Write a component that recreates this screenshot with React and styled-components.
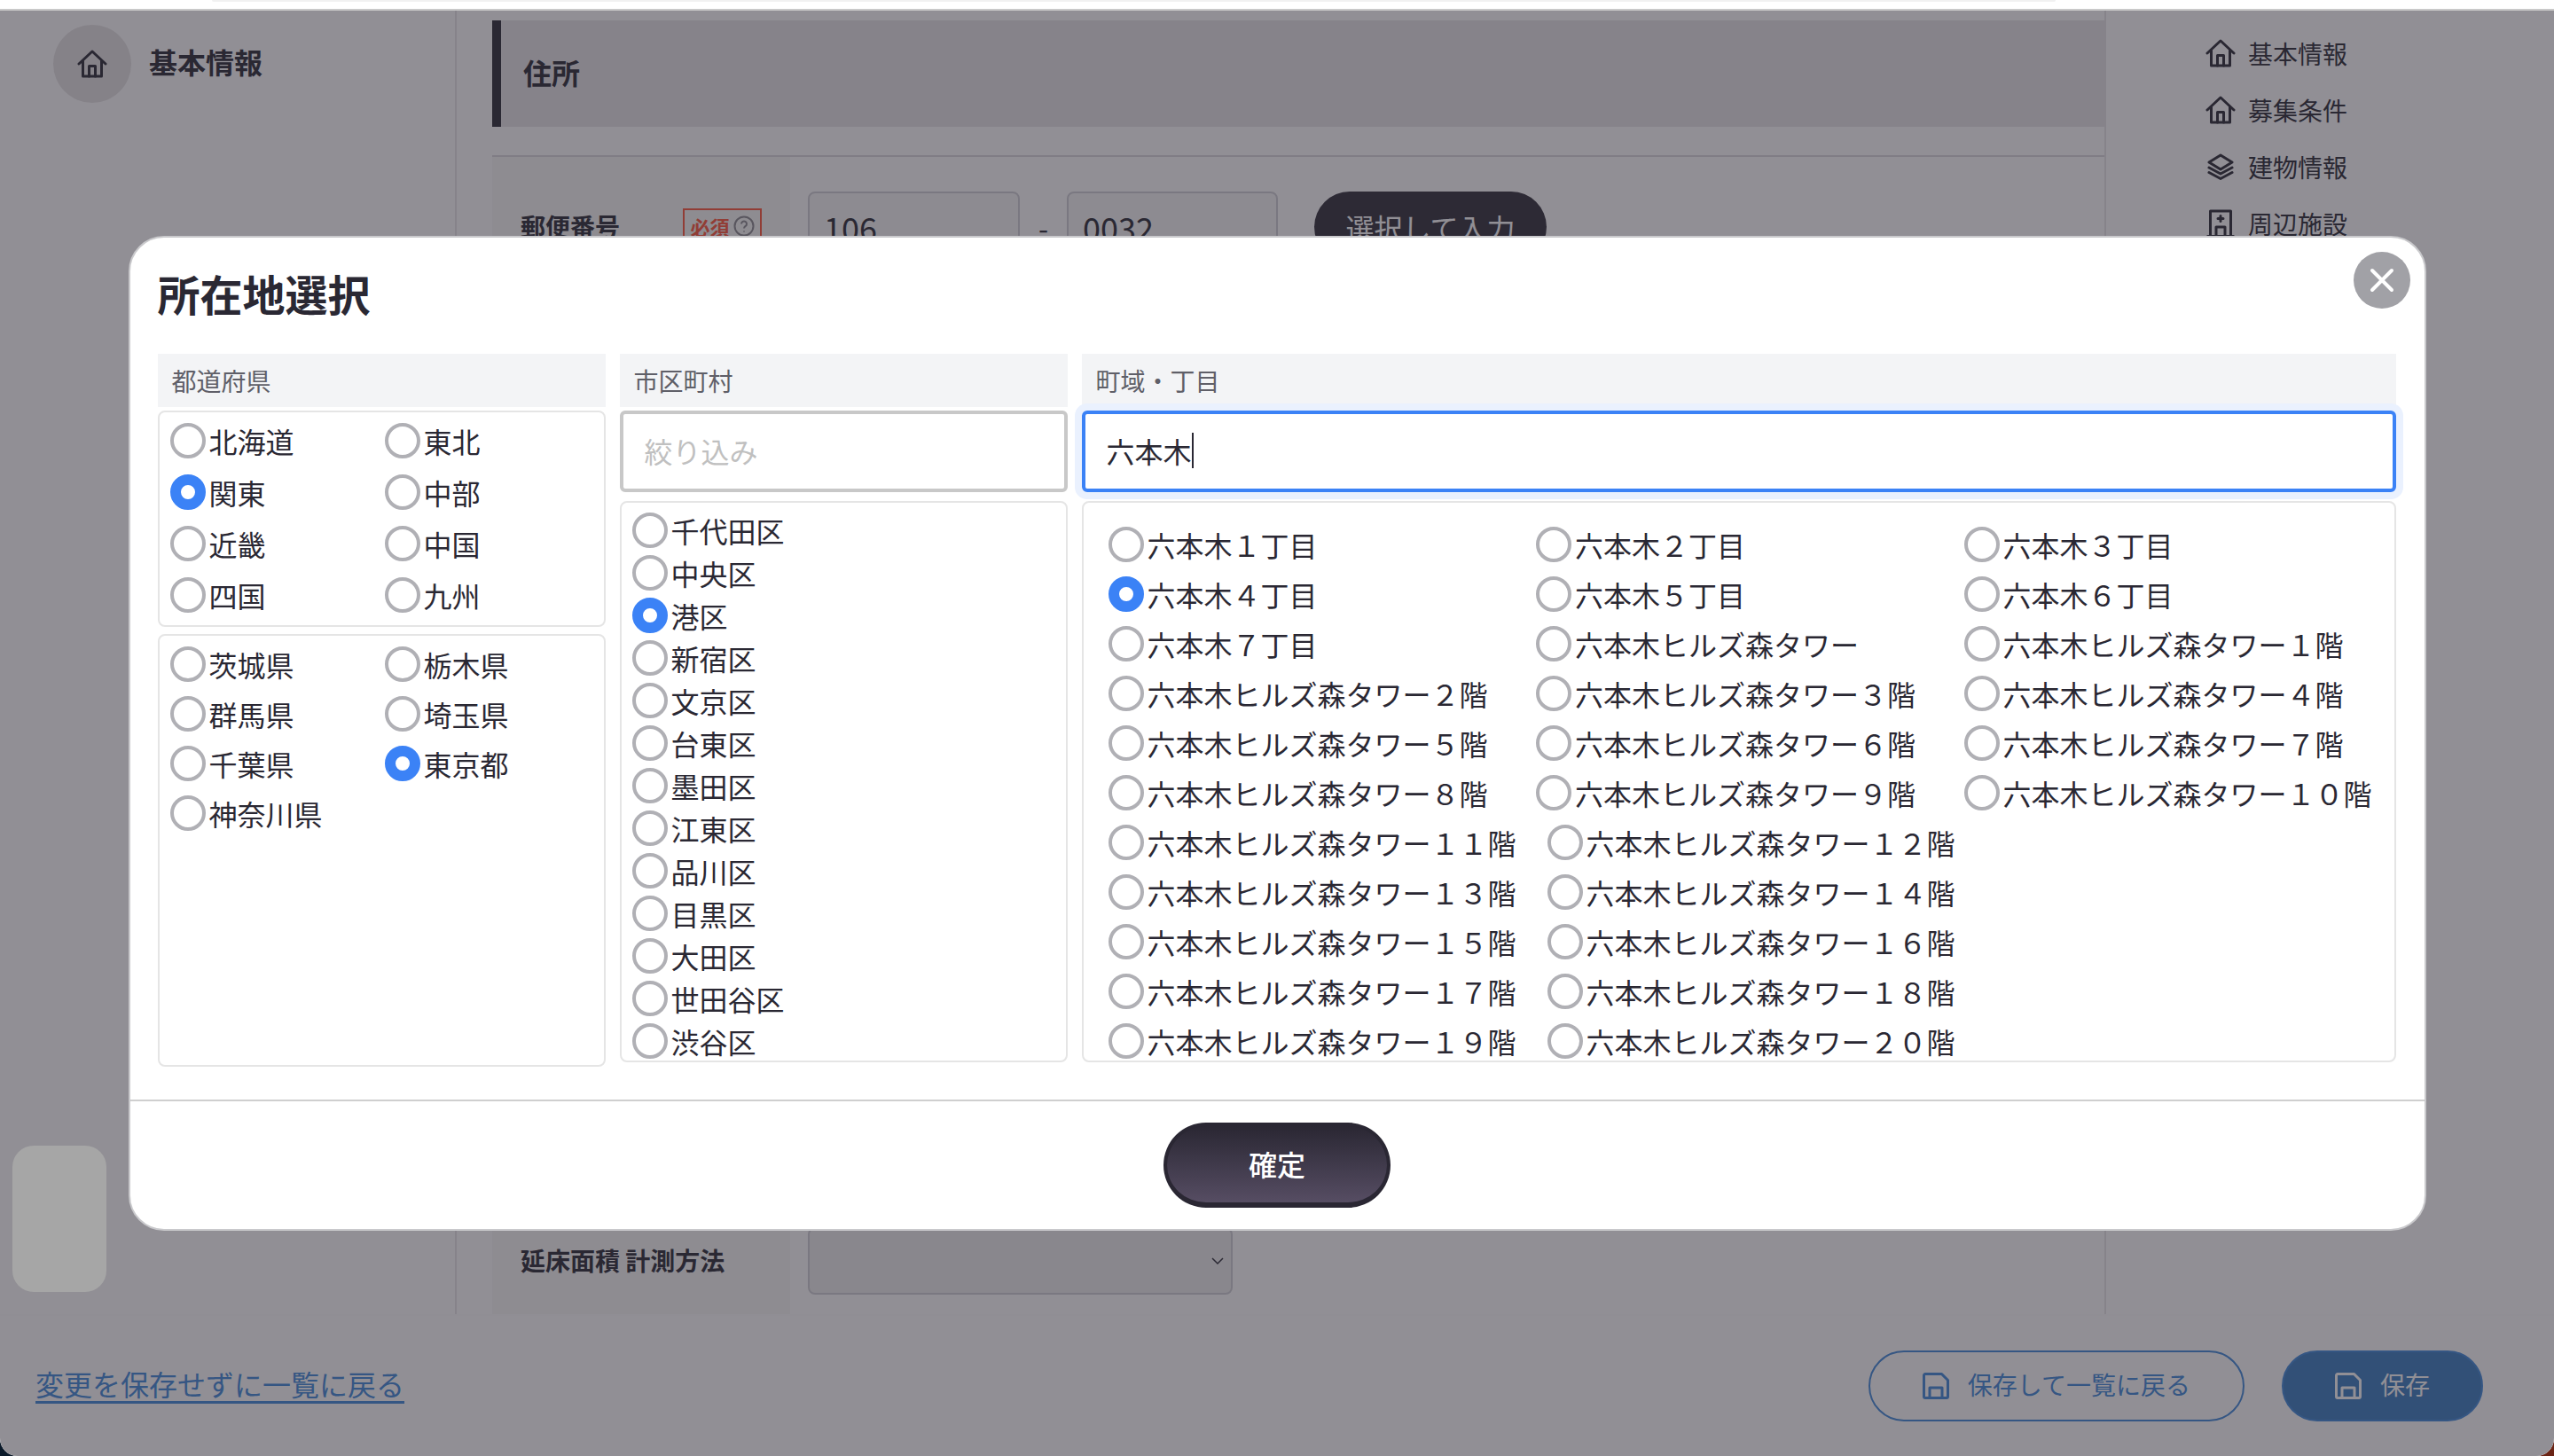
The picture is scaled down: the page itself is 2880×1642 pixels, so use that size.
import React from "react";
import styled, { createGlobalStyle } from "styled-components";

const GlobalStyle = createGlobalStyle`
  html, body {
    margin: 0;
    padding: 0;
    height: 100%;
  }
  body {
    background: linear-gradient(90deg, #0b1a2a 0%, #0b1a2a 50%, #6b2415 50%, #6b2415 100%);
    font-family: "Noto Sans CJK JP", "Noto Sans", sans-serif;
    color: #31313b;
    overflow: hidden;
  }
  * {
    box-sizing: border-box;
  }
`;

const Frame = styled.div`
  width: 2880px;
  height: 1642px;
  display: flex;
  flex-direction: column;
  background: #fff;
  border-radius: 0 0 20px 20px;
  overflow: hidden;
`;

const TopStrip = styled.div`
  height: 12px;
  flex: none;
  background: #fff;
  border-bottom: 2px solid #c9c9c9;
  padding: 0 562px 0 239px;
`;

const TabEdge = styled.div`
  height: 2px;
  background: #f1f1f1;
  border-radius: 0 0 4px 4px;
`;

const Stage = styled.div`
  position: relative;
  flex: 1;
  min-height: 0;
  display: flex;
  flex-direction: column;
`;

const Columns = styled.div`
  flex: 1;
  min-height: 0;
  display: flex;
`;

const Sidebar = styled.aside`
  width: 515px;
  flex: none;
  border-right: 2px solid #e9e7e9;
  padding: 16px 0 0 60px;
`;

const SideItem = styled.div`
  display: flex;
  align-items: center;
  gap: 20px;
  font-size: 32px;
  font-weight: 700;
  line-height: 44px;
`;

const SideLabel = styled.span`
  margin-bottom: 6px;
`;

const HomeCircle = styled.div`
  width: 88px;
  height: 88px;
  border-radius: 50%;
  background: #e7e5e5;
  display: flex;
  align-items: center;
  justify-content: center;
`;

const Main = styled.main`
  flex: 1;
  min-width: 0;
  padding: 11px 0 0 40px;
  display: flex;
  flex-direction: column;
`;

const SectionBand = styled.div`
  height: 120px;
  flex: none;
  background: #e9e7e9;
  border-left: 10px solid #31313b;
  padding: 0 0 4px 25px;
  display: flex;
  align-items: center;
  font-size: 32px;
  font-weight: 700;
`;

const FormTable = styled.div`
  margin-top: 32px;
  border-top: 2px solid #dcdade;
  flex: 1;
  min-height: 0;
  display: flex;
  flex-direction: column;
`;

const FormRow = styled.div`
  display: flex;
  flex: ${(p) => (p.$grow ? 1 : "none")};
  height: ${(p) => (p.$grow ? "auto" : p.$height)};
`;

const LabelCell = styled.div`
  width: 336px;
  flex: none;
  background: #f9f9f7;
  padding: 0 32px 2px;
  display: flex;
  align-items: center;
  justify-content: space-between;
  font-size: 28px;
  font-weight: 700;
`;

const Required = styled.span`
  width: 89px;
  height: 40px;
  border: 2px solid #ff5a40;
  display: flex;
  align-items: center;
  justify-content: center;
  gap: 4px;
  color: #ff5a40;
  font-size: 22px;
  font-weight: 700;
  line-height: 1;
`;

const ValueCell = styled.div`
  flex: 1;
  padding-left: 20px;
  display: flex;
  align-items: center;
`;

const ZipInput = styled.div`
  width: ${(p) => p.$width};
  height: 80px;
  border: 2px solid #d1d1d6;
  border-radius: 8px;
  background: #f7f7f7;
  padding-left: 16px;
  display: flex;
  align-items: center;
  font-size: 36px;
`;

const Dash = styled.span`
  width: 53px;
  text-align: center;
  font-size: 32px;
`;

const PickButton = styled.div`
  width: 262px;
  height: 80px;
  margin-left: 41px;
  border-radius: 46px;
  background: #37353f;
  color: #fff;
  display: flex;
  align-items: center;
  justify-content: center;
  font-size: 32px;
`;

const SelectBox = styled.div`
  width: 479px;
  height: 76px;
  border: 2px solid #d1d1d6;
  border-radius: 8px;
  background: #efefef;
  padding-right: 6px;
  display: flex;
  align-items: center;
  justify-content: flex-end;
`;

const RightNav = styled.nav`
  width: 507px;
  flex: none;
  border-left: 2px solid #e9e7e9;
  padding: 16px 0 0 111px;
`;

const NavItem = styled.div`
  height: 64px;
  display: flex;
  align-items: center;
  gap: 13px;
  font-size: 28px;
`;

const NavIcon = styled.div`
  width: 36px;
  display: flex;
  justify-content: center;
`;

const BottomBar = styled.footer`
  height: 160px;
  flex: none;
  padding: 0 80px 0 40px;
  display: flex;
  align-items: center;
  justify-content: space-between;
  background: #fff;
  border-top: 2px solid #fcfcfc;
`;

const BackLink = styled.a`
  margin-bottom: 7px;
  font-size: 32px;
  color: #478ddb;
  text-decoration: underline;
  text-decoration-thickness: 3px;
  text-underline-offset: 6px;
`;

const BarActions = styled.div`
  display: flex;
  gap: 42px;
`;

const SaveButton = styled.div`
  height: 80px;
  padding: 0 ${(p) => (p.$solid ? "58px" : "59px")};
  border-radius: 40px;
  border: 2px solid #478ddb;
  background: ${(p) => (p.$solid ? "#4181c3" : "transparent")};
  color: ${(p) => (p.$solid ? "#fff" : "#478ddb")};
  display: flex;
  align-items: center;
  gap: 21px;
  font-size: 28px;
`;

const SaveLabel = styled.span`
  margin-bottom: 4px;
`;

const Overlay = styled.div`
  position: absolute;
  inset: 0;
  background: rgba(35, 31, 43, 0.5);
  display: flex;
  align-items: center;
  justify-content: center;
`;

const ScrollThumb = styled.div`
  position: absolute;
  left: 14px;
  top: 1280px;
  width: 106px;
  height: 165px;
  border-radius: 24px;
  background: #a6a6a6;
`;

const Modal = styled.div`
  position: relative;
  width: 2591px;
  height: 1122px;
  border: 2px solid #c9c9cc;
  border-radius: 40px;
  background: #fff;
  display: flex;
  flex-direction: column;
`;

const CloseButton = styled.button`
  position: absolute;
  top: 16px;
  right: 16px;
  width: 64px;
  height: 64px;
  padding: 0;
  border: none;
  border-radius: 50%;
  background: #a1a1a6;
  display: flex;
  align-items: center;
  justify-content: center;
`;

const ModalBody = styled.div`
  padding: 30px 32px 37px 31px;
  border-bottom: 2px solid #cfcfcf;
`;

const Title = styled.h2`
  margin: 0 0 37px;
  font-size: 48px;
  line-height: 64px;
  font-weight: 700;
  color: #2a2833;
`;

const PickerGrid = styled.div`
  display: grid;
  grid-template-columns: 505px 505px 1482px;
  gap: 16px;
  height: 804px;
`;

const PickerColumn = styled.div`
  display: flex;
  flex-direction: column;
  min-height: 0;
`;

const ColumnHead = styled.div`
  height: 60px;
  flex: none;
  margin-bottom: 4px;
  padding-left: 16px;
  background: #f3f4f6;
  color: #5f5f68;
  font-size: 28px;
  display: flex;
  align-items: center;
`;

const ChoiceBox = styled.div`
  border: 2px solid #e5e5e5;
  border-radius: 8px;
  overflow: hidden;
  min-height: 0;
`;

const RegionBox = styled(ChoiceBox)`
  height: 244px;
  flex: none;
  margin-bottom: 8px;
  padding: 3px 12px;
  display: grid;
  grid-template-columns: 242px 242px;
  grid-auto-rows: 58px;
`;

const PrefectureBox = styled(ChoiceBox)`
  flex: 1;
  padding: 4px 12px;
  display: grid;
  grid-template-columns: 242px 242px;
  grid-auto-rows: 56px;
`;

const CityBox = styled(ChoiceBox)`
  flex: 1;
  margin: 10px 0 5px;
  padding: 7px 12px 0;
`;

const TownBox = styled(ChoiceBox)`
  flex: 1;
  margin: 10px 0 5px;
  padding: 19px 0 0 28px;
  display: flex;
  flex-wrap: wrap;
  align-content: flex-start;
`;

const Choice = styled.label`
  display: flex;
  align-items: center;
  gap: 4px;
  height: ${(p) => p.$height || "100%"};
  width: ${(p) => p.$width || "auto"};
  font-size: 32px;
  line-height: 1;
  color: #2a2833;
  white-space: nowrap;
`;

const Radio = styled.input.attrs({ type: "radio" })`
  appearance: none;
  width: 40px;
  height: 40px;
  flex: none;
  margin: 0;
  border: 4px solid #b0b0b5;
  border-radius: 50%;
  background: #fff;
  &:checked {
    border: 12px solid #3b82f6;
  }
`;

const FilterInput = styled.input`
  height: 92px;
  flex: none;
  width: 100%;
  padding: 0 24px 3px;
  border: 4px solid #c8c8c8;
  border-radius: 6px;
  outline: none;
  font-family: inherit;
  font-size: 32px;
  &::placeholder {
    color: #c0c0c0;
  }
`;

const ActiveInput = styled.div`
  height: 92px;
  flex: none;
  padding: 0 24px 3px;
  border: 4px solid #3b82f6;
  border-radius: 6px;
  box-shadow: 0 0 0 8px #eaf1fe;
  display: flex;
  align-items: center;
  font-size: 32px;
  color: #2a2833;
  position: relative;
`;

const Caret = styled.span`
  width: 2px;
  height: 40px;
  background: #2a2833;
`;

const ModalFooter = styled.div`
  flex: 1;
  display: flex;
  align-items: center;
  justify-content: center;
`;

const ConfirmButton = styled.button`
  width: 256px;
  height: 96px;
  padding: 0 0 2px;
  border: 4px solid #2a2733;
  border-bottom-width: 6px;
  border-radius: 48px;
  background: linear-gradient(180deg, #2a2733 0%, #564d63 100%);
  color: #fff;
  font-family: inherit;
  font-size: 32px;
  font-weight: 500;
`;

const HomeIcon = () => (
  <svg width="34" height="32" viewBox="0 0 34 32" fill="none" stroke="#31313b" strokeWidth="3" strokeLinecap="round" strokeLinejoin="round">
    <path d="M2 16 17 2l15 14" />
    <path d="M6.5 13v17h21V13" />
    <path d="M13.5 30V18.5h7V30" />
  </svg>
);

const LayersIcon = () => (
  <svg width="30" height="30" viewBox="0 0 30 30" fill="none" stroke="#31313b" strokeWidth="3" strokeLinecap="round" strokeLinejoin="round">
    <path d="M15 2 28 10 15 18 2 10z" />
    <path d="M2 16l13 7 13-7" />
    <path d="M2 21.5l13 7 13-7" />
  </svg>
);

const HospitalIcon = () => (
  <svg width="32" height="32" viewBox="0 0 32 32" fill="none" stroke="#31313b" strokeWidth="3" strokeLinecap="round" strokeLinejoin="round">
    <path d="M1.5 30.5h29" />
    <path d="M4.5 30.5V2h23v28.5" />
    <path d="M11 30.5V20h10v10.5" />
    <path d="M16 7.5v6M13 10.5h6" />
  </svg>
);

const SaveIcon = ({ color }) => (
  <svg width="30" height="30" viewBox="0 0 30 30" fill="none" stroke={color} strokeWidth="3" strokeLinejoin="round">
    <path d="M1.5 3a1.5 1.5 0 0 1 1.5-1.5h18.5L28.5 8.500v18.500a1.500 1.500 0 0 1-1.500 1.500H3A1.500 1.500 0 0 1 1.500 27z" />
    <path d="M8 28.500V17h14v11.500" />
  </svg>
);

const CloseIcon = () => (
  <svg width="28" height="28" viewBox="0 0 28 28" fill="none" stroke="#fff" strokeWidth="4" strokeLinecap="round">
    <path d="M3 3l22 22M25 3 3 25" />
  </svg>
);

const HelpIcon = () => (
  <svg width="24" height="24" viewBox="0 0 24 24" fill="none" stroke="#8f8d92" strokeWidth="2">
    <circle cx="12" cy="12" r="10.500" />
    <path d="M9 9.500a3 3 0 1 1 4.500 2.600c-1 .6-1.500 1.200-1.500 2.400" />
    <path d="M12 17.500v1" />
  </svg>
);

const Chevron = () => (
  <svg width="18" height="12" viewBox="0 0 18 12" fill="none" stroke="#31313b" strokeWidth="1.5">
    <path d="M3 3l6 6 6-6" />
  </svg>
);

const regions = ["北海道", "東北", "関東", "中部", "近畿", "中国", "四国", "九州"];
const prefectures = ["茨城県", "栃木県", "群馬県", "埼玉県", "千葉県", "東京都", "神奈川県"];
const cities = [
  "千代田区", "中央区", "港区", "新宿区", "文京区", "台東区", "墨田区",
  "江東区", "品川区", "目黒区", "大田区", "世田谷区", "渋谷区",
];

const zen = (n) => String(n).replace(/\d/g, (d) => "０１２３４５６７８９"[d]);

const towns = [
  ...[1, 2, 3, 4, 5, 6, 7].map((n) => ({ name: `六本木${zen(n)}丁目` })),
  { name: "六本木ヒルズ森タワー" },
  ...Array.from({ length: 20 }, (_, i) => ({
    name: `六本木ヒルズ森タワー${zen(i + 1)}階`,
    wide: i >= 10,
  })),
];

const navItems = [
  { label: "基本情報", icon: <HomeIcon /> },
  { label: "募集条件", icon: <HomeIcon /> },
  { label: "建物情報", icon: <LayersIcon /> },
  { label: "周辺施設", icon: <HospitalIcon /> },
];

const App = () => (
  <>
    <GlobalStyle />
    <Frame>
      <TopStrip>
        <TabEdge />
      </TopStrip>
      <Stage>
        <Columns>
          <Sidebar>
            <SideItem>
              <HomeCircle>
                <HomeIcon />
              </HomeCircle>
              <SideLabel>基本情報</SideLabel>
            </SideItem>
          </Sidebar>
          <Main>
            <SectionBand>住所</SectionBand>
            <FormTable>
              <FormRow $height="158px">
                <LabelCell>
                  郵便番号
                  <Required>
                    必須
                    <HelpIcon />
                  </Required>
                </LabelCell>
                <ValueCell>
                  <ZipInput $width="239px">106</ZipInput>
                  <Dash>-</Dash>
                  <ZipInput $width="238px">0032</ZipInput>
                  <PickButton>選択して入力</PickButton>
                </ValueCell>
              </FormRow>
              <FormRow $grow>
                <LabelCell />
              </FormRow>
              <FormRow $height="120px">
                <LabelCell>延床面積 計測方法</LabelCell>
                <ValueCell>
                  <SelectBox>
                    <Chevron />
                  </SelectBox>
                </ValueCell>
              </FormRow>
            </FormTable>
          </Main>
          <RightNav>
            {navItems.map((item) => (
              <NavItem key={item.label}>
                <NavIcon>{item.icon}</NavIcon>
                {item.label}
              </NavItem>
            ))}
          </RightNav>
        </Columns>
        <BottomBar>
          <BackLink href="#">変更を保存せずに一覧に戻る</BackLink>
          <BarActions>
            <SaveButton>
              <SaveIcon color="#478ddb" />
              <SaveLabel>保存して一覧に戻る</SaveLabel>
            </SaveButton>
            <SaveButton $solid>
              <SaveIcon color="#fff" />
              <SaveLabel>保存</SaveLabel>
            </SaveButton>
          </BarActions>
        </BottomBar>
        <Overlay>
          <Modal>
            <CloseButton aria-label="閉じる">
              <CloseIcon />
            </CloseButton>
            <ModalBody>
              <Title>所在地選択</Title>
              <PickerGrid>
                <PickerColumn>
                  <ColumnHead>都道府県</ColumnHead>
                  <RegionBox>
                    {regions.map((name) => (
                      <Choice key={name}>
                        <Radio name="region" defaultChecked={name === "関東"} />
                        {name}
                      </Choice>
                    ))}
                  </RegionBox>
                  <PrefectureBox>
                    {prefectures.map((name) => (
                      <Choice key={name}>
                        <Radio name="prefecture" defaultChecked={name === "東京都"} />
                        {name}
                      </Choice>
                    ))}
                  </PrefectureBox>
                </PickerColumn>
                <PickerColumn>
                  <ColumnHead>市区町村</ColumnHead>
                  <FilterInput placeholder="絞り込み" readOnly />
                  <CityBox>
                    {cities.map((name) => (
                      <Choice key={name} $height="48px">
                        <Radio name="city" defaultChecked={name === "港区"} />
                        {name}
                      </Choice>
                    ))}
                  </CityBox>
                </PickerColumn>
                <PickerColumn>
                  <ColumnHead>町域・丁目</ColumnHead>
                  <ActiveInput>
                    六本木
                    <Caret />
                  </ActiveInput>
                  <TownBox>
                    {towns.map((town) => (
                      <Choice key={town.name} $height="56px" $width={town.wide ? "495px" : "482.5px"}>
                        <Radio name="town" defaultChecked={town.name === "六本木４丁目"} />
                        {town.name}
                      </Choice>
                    ))}
                  </TownBox>
                </PickerColumn>
              </PickerGrid>
            </ModalBody>
            <ModalFooter>
              <ConfirmButton>確定</ConfirmButton>
            </ModalFooter>
          </Modal>
        </Overlay>
        <ScrollThumb />
      </Stage>
    </Frame>
  </>
);

export default App;
